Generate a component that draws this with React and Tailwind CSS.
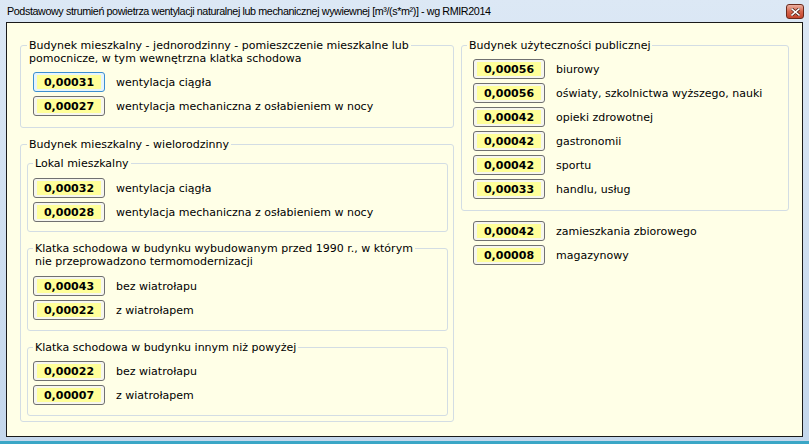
const cream = 'bg-[#ffffe7]';

const Val = ({ v, focus }) => (
  <div
    className={`flex h-[20px] w-[72px] shrink-0 rounded-[3px] border px-[3px] py-[2px] ${
      focus ? 'border-[#3c8fd0] bg-[#e6f4fc]' : 'border-[#707070] bg-[#f6f6ee]'
    }`}
  >
    <div className="flex h-full w-full items-center justify-center bg-[#ffff99] text-[11px] font-bold leading-none text-black">
      {v}
    </div>
  </div>
);

const Row = ({ v, label, focus }) => (
  <div className="flex items-center gap-[11px]">
    <Val v={v} focus={focus} />
    <span className="text-[11px] leading-none text-black">{label}</span>
  </div>
);

const Group = ({ title, ml = 'ml-[6px]', className = '', children }) => (
  <div className={`rounded-[3px] border border-[#d3dde4] ${className}`}>
    <div className={`-mt-[7px] w-fit ${cream} px-[2px] text-[11px] leading-[13px] text-black ${ml}`}>{title}</div>
    {children}
  </div>
);

const Rows = ({ items, className = '' }) => (
  <div className={`flex flex-col gap-[4px] ${className}`}>
    {items.map((r, i) => (
      <Row key={i} v={r[0]} label={r[1]} focus={r[2]} />
    ))}
  </div>
);

export default function App() {
  return (
    <div
      className="flex h-[444px] w-[809px] flex-col overflow-hidden bg-gradient-to-b from-[#dce8f5] to-[#c4d7ec]"
      style={{ fontFamily: '"DejaVu Sans", Verdana, sans-serif' }}
    >
      {/* title bar */}
      <div className="flex h-[22px] shrink-0 items-center justify-between pl-[7px] pr-[5px]">
        <span
          className="text-[10.75px] tracking-[-0.4px] text-black"
          style={{ fontFamily: '"Liberation Sans", Arial, sans-serif' }}
        >
          Podstawowy strumień powietrza wentylacji naturalnej lub mechanicznej wywiewnej [m³/(s*m²)] - wg RMIR2014
        </span>
        <div className="mt-[1px] flex h-[15px] w-[18px] items-center justify-center rounded-[3px] border border-[#6b2a1d] bg-gradient-to-b from-[#eab0a2] via-[#d6654d] to-[#c2442c]">
          <svg width="9" height="8" viewBox="0 0 9 8">
            <path d="M1 1 L8 7 M8 1 L1 7" stroke="#4a1a10" strokeWidth="3" strokeLinecap="square" />
            <path d="M1 1 L8 7 M8 1 L1 7" stroke="#ffffff" strokeWidth="1.6" strokeLinecap="square" />
          </svg>
        </div>
      </div>

      {/* client */}
      <div className="mx-[6px] flex h-[415px] shrink-0 border border-[#1a1a1a] bg-[#ffffe7]">
        <div className="flex items-start gap-[7px] pl-[13px] pt-[22px]">
          {/* left column */}
          <div className="flex w-[434px] flex-col">
            <Group
              title={
                <>
                  Budynek mieszkalny - jednorodzinny - pomieszczenie mieszkalne lub
                  <br />
                  pomocnicze, w tym wewnętrzna klatka schodowa
                </>
              }
              className="pb-[11px]"
            >
              <Rows
                className="mt-[7px] pl-[12px]"
                items={[
                  ['0,00031', 'wentylacja ciągła', true],
                  ['0,00027', 'wentylacja mechaniczna z osłabieniem w nocy'],
                ]}
              />
            </Group>

            <Group title="Budynek mieszkalny - wielorodzinny" className="mt-[16px] pb-[5px]">
              <div className="flex flex-col pl-[6px] pr-[5px]">
                <Group title="Lokal mieszkalny" ml="ml-[5px]" className="mt-[12px] pb-[9px]">
                  <Rows
                    className="mt-[8px] pl-[5px]"
                    items={[
                      ['0,00032', 'wentylacja ciągła'],
                      ['0,00028', 'wentylacja mechaniczna z osłabieniem w nocy'],
                    ]}
                  />
                </Group>
                <Group
                  title={
                    <>
                      Klatka schodowa w budynku wybudowanym przed 1990 r., w którym
                      <br />
                      nie przeprowadzono termomodernizacji
                    </>
                  }
                  ml="ml-[5px]"
                  className="mt-[16px] pb-[10px]"
                >
                  <Rows
                    className="mt-[8px] pl-[5px]"
                    items={[
                      ['0,00043', 'bez wiatrołapu'],
                      ['0,00022', 'z wiatrołapem'],
                    ]}
                  />
                </Group>
                <Group
                  title="Klatka schodowa w budynku innym niż powyżej"
                  ml="ml-[5px]"
                  className="mt-[16px] pb-[10px]"
                >
                  <Rows
                    className="mt-[7px] pl-[5px]"
                    items={[
                      ['0,00022', 'bez wiatrołapu'],
                      ['0,00007', 'z wiatrołapem'],
                    ]}
                  />
                </Group>
              </div>
            </Group>
          </div>

          {/* right column */}
          <div className="flex w-[328px] flex-col">
            <Group title="Budynek użyteczności publicznej" ml="ml-[5px]" className="pb-[11px]">
              <Rows
                className="mt-[7px] pl-[11px]"
                items={[
                  ['0,00056', 'biurowy'],
                  ['0,00056', 'oświaty, szkolnictwa wyższego, nauki'],
                  ['0,00042', 'opieki zdrowotnej'],
                  ['0,00042', 'gastronomii'],
                  ['0,00042', 'sportu'],
                  ['0,00033', 'handlu, usług'],
                ]}
              />
            </Group>
            <Rows
              className="mt-[10px] pl-[12px]"
              items={[
                ['0,00042', 'zamieszkania zbiorowego'],
                ['0,00008', 'magazynowy'],
              ]}
            />
          </div>
        </div>
      </div>

      {/* bottom frame */}
      <div className="mt-auto h-[3px] bg-[#3aa6c6]" />
    </div>
  );
}
